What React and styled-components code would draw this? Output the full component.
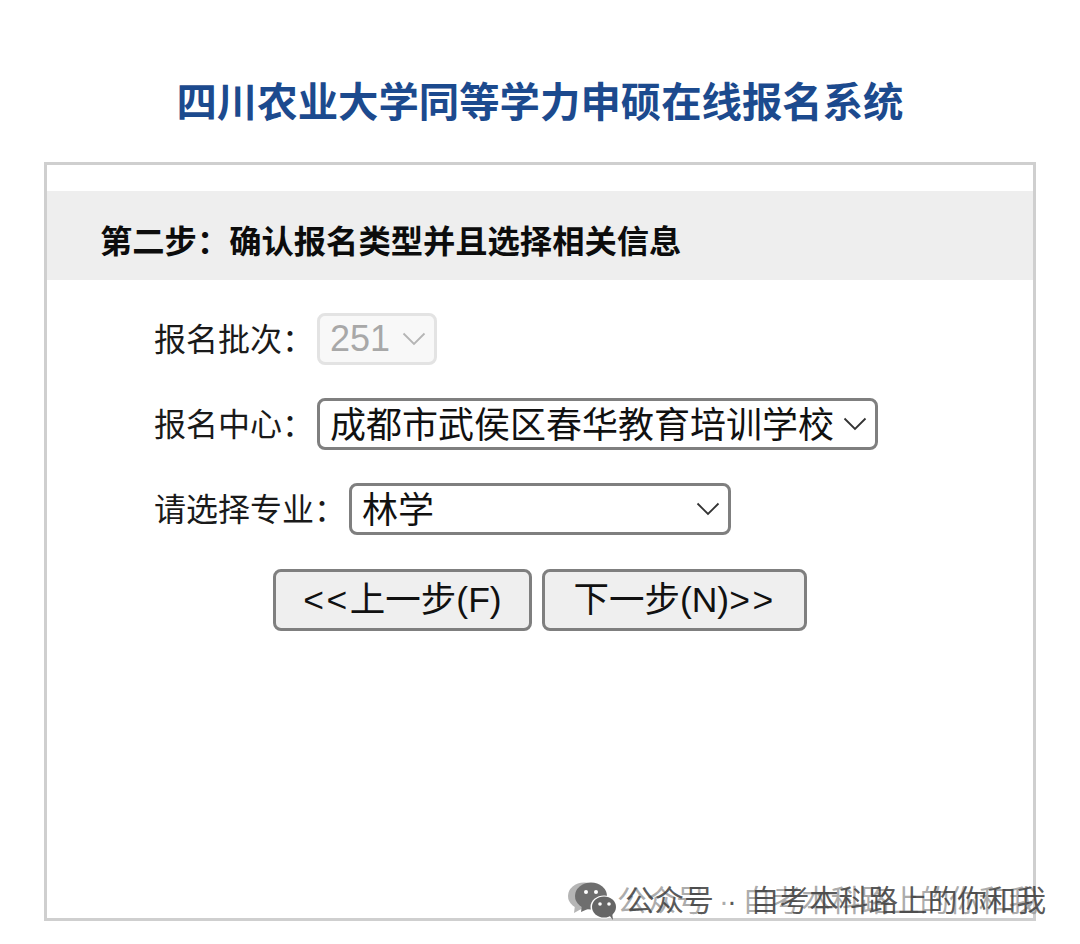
import styled, { createGlobalStyle } from "styled-components";

const GlobalStyle = createGlobalStyle`
    html, body {
        margin: 0;
        padding: 0;
        background: #fff;
    }
    body {
        font-family: "Liberation Sans", "Noto Sans CJK SC", sans-serif;
        color: #111;
    }
`

const Page = styled.div`
    position: relative;
    width: 1080px;
    height: 944px;
    overflow: hidden;
    padding: 0 44px;
    box-sizing: border-box;
`

const Title = styled.h1`
    height: 162px;
    margin: 0;
    padding-top: 77px;
    box-sizing: border-box;
    text-align: center;
    font-size: 40.4px;
    line-height: 52px;
    font-weight: 700;
    color: #1c4a8e;
    white-space: nowrap;
`

const Panel = styled.div`
    height: 759px;
    box-sizing: border-box;
    border: 3px solid #cfcfcf;
    padding-top: 26px;
`

const StepBar = styled.h2`
    margin: 0;
    height: 89px;
    padding-left: 53px;
    background: #eeeeee;
    font-size: 32.3px;
    line-height: 102px;
    font-weight: 700;
    color: #0c0c0c;
    white-space: nowrap;
    overflow: hidden;
`

const Form = styled.div`
    display: flex;
    flex-direction: column;
    gap: 33px;
    padding: 33px 0 0 107px;
`

const Row = styled.div`
    display: flex;
    align-items: center;
    height: 52px;
`

const Label = styled.label`
    padding-top: 2px;
    font-size: 32px;
    line-height: 50px;
    color: #1a1a1a;
    white-space: nowrap;
    flex: none;
    width: ${props => props.width}px;
`

const SelectWrap = styled.div`
    position: relative;
    flex: none;
    width: ${props => props.width}px;
    height: 52px;
`

const Select = styled.select`
    appearance: none;
    width: 100%;
    height: 100%;
    box-sizing: border-box;
    margin: 0;
    padding: ${props => props.disabled ? "0 0 2px 10px" : "2px 0 0 10px"};
    border: 3px solid ${props => props.disabled ? "#e3e3e3" : "#7f7f7f"};
    border-radius: 8px;
    background: ${props => props.disabled ? "#f8f8f8" : "#fff"};
    color: ${props => props.disabled ? "#a8a8a8" : "#111"};
    opacity: 1;
    font-family: inherit;
    font-size: 36px;
    line-height: 46px;
    outline: none;
`

const Chevron = styled.svg`
    position: absolute;
    right: 11px;
    top: 19px;
    width: 24px;
    height: 14px;
    pointer-events: none;
    color: ${props => props.$muted ? "#b5b5b5" : "#333"};
`

const Buttons = styled.div`
    display: flex;
    justify-content: center;
    gap: 10px;
    margin: 34px 0 0;
`

const Button = styled.button`
    width: ${props => props.width}px;
    height: 62px;
    padding: 0;
    box-sizing: border-box;
    border: 3px solid #7f7f7f;
    border-radius: 8px;
    background: #efefef;
    color: #111;
    font-family: inherit;
    font-size: 35.5px;
    line-height: 56px;
    white-space: nowrap;
`

// the angle brackets sit wider apart than Liberation sets them
const Arrows = styled.span`
    letter-spacing: 2.5px;
`

const Watermark = styled.div`
    position: absolute;
    left: 567px;
    top: 880px;
    display: flex;
    align-items: center;
    gap: 6px;
    height: 42px;
`

const WatermarkText = styled.span`
    font-size: 29.6px;
    line-height: 42px;
    word-spacing: 5px;
    color: rgba(60, 60, 60, 0.86);
    text-shadow: -8px 0 0 rgba(150, 150, 150, 0.8);
    white-space: nowrap;
`

const ChevronIcon = ({ muted }) => (
    <Chevron $muted={muted} viewBox="0 0 24 14" fill="none">
        <polyline points="1.5,1.5 12,12 22.5,1.5" stroke="currentColor" strokeWidth="1.8" />
    </Chevron>
)

const WeChatIcon = () => (
    <svg width="52" height="40" viewBox="0 0 52 40">
        <ellipse cx="17" cy="15" rx="16" ry="13.5" fill="#b5b5b5" />
        <path d="M8 24l-1 8 9-5z" fill="#b5b5b5" />
        <ellipse cx="24" cy="15" rx="16" ry="13.5" fill="#6e6e6e" />
        <path d="M15 24l-1 7 9-4z" fill="#6e6e6e" />
        <circle cx="19" cy="11" r="2" fill="#fff" />
        <circle cx="29" cy="11" r="2" fill="#fff" />
        <ellipse cx="37" cy="26" rx="13.5" ry="11.5" fill="#fff" />
        <ellipse cx="37" cy="26" rx="12" ry="10.5" fill="#666" />
        <path d="M42 34l4 5-1-8z" fill="#666" />
        <circle cx="33" cy="23" r="1.8" fill="#fff" />
        <circle cx="42" cy="23" r="1.8" fill="#fff" />
    </svg>
)

const App = () => {
    return (
        <Page>
            <GlobalStyle />
            <Title>四川农业大学同等学力申硕在线报名系统</Title>
            <Panel>
                <StepBar>第二步：确认报名类型并且选择相关信息</StepBar>
                <Form>
                    <Row>
                        <Label width={163}>报名批次：</Label>
                        <SelectWrap width={120}>
                            <Select disabled defaultValue="251">
                                <option>251</option>
                            </Select>
                            <ChevronIcon muted />
                        </SelectWrap>
                    </Row>
                    <Row>
                        <Label width={163}>报名中心：</Label>
                        <SelectWrap width={561}>
                            <Select defaultValue="成都市武侯区春华教育培训学校">
                                <option>成都市武侯区春华教育培训学校</option>
                            </Select>
                            <ChevronIcon />
                        </SelectWrap>
                    </Row>
                    <Row>
                        <Label width={195}>请选择专业：</Label>
                        <SelectWrap width={382}>
                            <Select defaultValue="林学">
                                <option>林学</option>
                            </Select>
                            <ChevronIcon />
                        </SelectWrap>
                    </Row>
                </Form>
                <Buttons>
                    <Button width={259}><Arrows>&lt;&lt;</Arrows>上一步(F)</Button>
                    <Button width={265}>下一步(N)<Arrows>&gt;&gt;</Arrows></Button>
                </Buttons>
            </Panel>
            <Watermark>
                <WeChatIcon />
                <WatermarkText>公众号 · 自考本科路上的你和我</WatermarkText>
            </Watermark>
        </Page>
    )
}

export default App;
